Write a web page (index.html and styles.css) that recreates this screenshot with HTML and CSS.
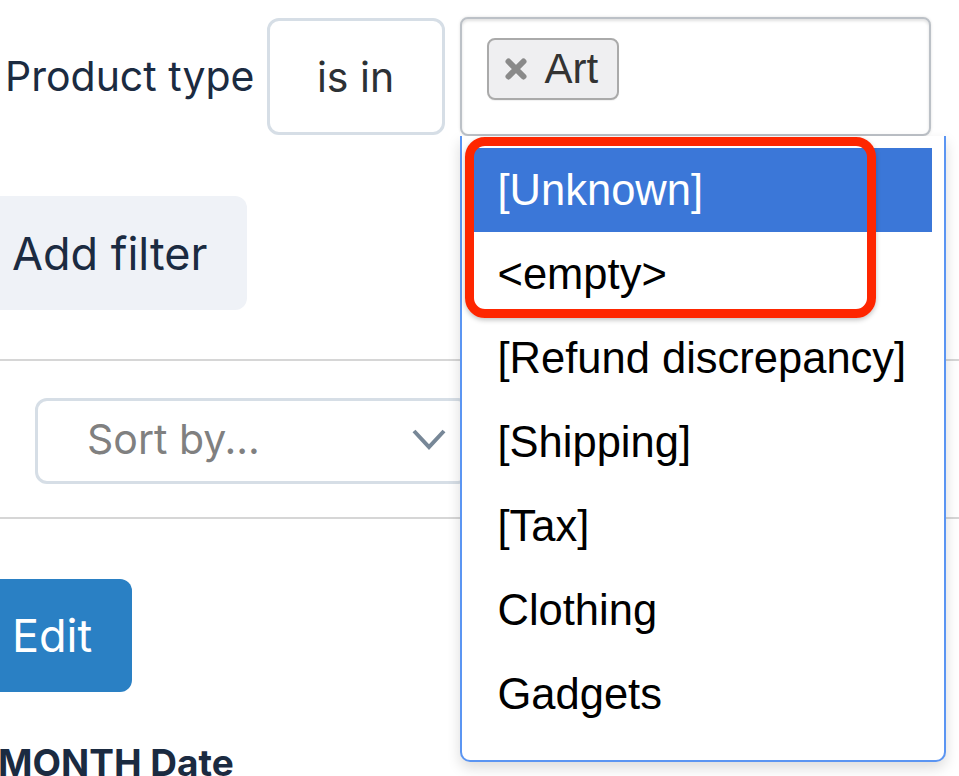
FILE: index.html
```html
<!DOCTYPE html>
<html lang="en">
<head>
<meta charset="utf-8">
<title>Filter</title>
<link rel="stylesheet" href="styles.css">
</head>
<body>
<div class="page">
  <div class="filter-row">
    <span class="field-label">Product type</span>
    <div class="op-box">is in</div>
    <div class="multi-wrap">
      <div class="multi">
        <span class="chip">
          <svg class="chip-x" viewBox="0 0 24 24" width="24" height="24" aria-hidden="true">
            <path d="M4.5 4.5 L19.5 19.5 M19.5 4.5 L4.5 19.5" stroke="#8a8a8a" stroke-width="6" stroke-linecap="round"/>
          </svg>
          <span class="chip-text">Art</span>
        </span>
      </div>
      <ul class="dropdown">
        <li class="opt active">[Unknown]</li>
        <li class="opt">&lt;empty&gt;</li>
        <li class="opt">[Refund discrepancy]</li>
        <li class="opt">[Shipping]</li>
        <li class="opt">[Tax]</li>
        <li class="opt">Clothing</li>
        <li class="opt">Gadgets</li>
      </ul>
      <div class="annotation"></div>
    </div>
  </div>

  <button class="btn-add">Add filter</button>

  <hr class="rule">

  <div class="sort-row">
    <div class="sort-box">
      <span class="sort-placeholder">Sort by...</span>
      <svg class="chevron" viewBox="0 0 34 21" width="34" height="21" aria-hidden="true">
        <polyline points="2,2 17,18 32,2" fill="none" stroke="#778797" stroke-width="4"/>
      </svg>
    </div>
  </div>

  <hr class="rule">

  <button class="btn-edit">Edit</button>

  <h3 class="col-title">MONTH Date</h3>
</div>
</body>
</html>
```

FILE: styles.css
```css
html, body {
  margin: 0;
  padding: 0;
  background: #ffffff;
  overflow: hidden;
}

body {
  font-family: Inter, "Noto Sans", sans-serif;
  color: #1b2b41;
}

.page {
  width: 959px;
  height: 776px;
  overflow: hidden;
}

/* ---------- filter row ---------- */
.filter-row {
  display: flex;
  align-items: center;
  padding-top: 17px;
  height: 119px;
}

.field-label {
  margin-left: 5px;
  margin-right: 12px;
  font-size: 41px;
  line-height: 1;
  color: #1b2b41;
  white-space: nowrap;
}

.op-box {
  box-sizing: border-box;
  width: 178px;
  height: 117px;
  border: 3px solid #d6dee6;
  border-radius: 12px;
  display: flex;
  align-items: center;
  justify-content: center;
  font-size: 41px;
  color: #2d3135;
  margin-right: 15px;
}

.multi-wrap {
  position: relative;
  width: 471px;
  height: 119px;
}

.multi {
  box-sizing: border-box;
  width: 471px;
  height: 119px;
  border: 2px solid #bcc1c7;
  border-radius: 8px;
  box-shadow: inset 0 2px 3px rgba(0, 0, 0, 0.12), 0 0 3px rgba(0, 0, 0, 0.12);
  padding: 19px 25px;
  background: #fff;
}

.chip {
  box-sizing: border-box;
  display: inline-flex;
  align-items: center;
  height: 62px;
  padding: 0 19px 0 15px;
  background: #efeff1;
  border: 2px solid #aaaaaa;
  border-radius: 8px;
  box-shadow: 0 1px 1px rgba(0, 0, 0, 0.06);
}

.chip-x {
  display: block;
  margin-right: 17px;
}

.chip-text {
  font-family: "Liberation Sans", Arial, sans-serif;
  font-size: 42px;
  color: #333333;
  line-height: 1;
}

/* ---------- dropdown (overlay) ---------- */
.dropdown {
  position: absolute;
  left: 0;
  top: 119px;
  box-sizing: border-box;
  width: 486px;
  height: 626px;
  margin: 0;
  padding: 12px 12px 0 12px;
  list-style: none;
  background: #ffffff;
  border: 2px solid #5b95f2;
  border-top: none;
  border-radius: 0 0 10px 10px;
  box-shadow: 0 6px 14px rgba(0, 0, 0, 0.14);
  z-index: 5;
}

.opt {
  height: 84px;
  line-height: 84px;
  padding-left: 24px;
  font-family: "Liberation Sans", Arial, sans-serif;
  font-size: 43.5px;
  color: #000000;
  white-space: nowrap;
}

.opt.active {
  background: #3b77d8;
  color: #ffffff;
}

.annotation {
  position: absolute;
  left: 5px;
  top: 120px;
  box-sizing: border-box;
  width: 411px;
  height: 181px;
  border: 9px solid #fe2600;
  border-radius: 20px;
  box-shadow: 0 2px 5px rgba(0, 0, 0, 0.25);
  z-index: 6;
}

/* ---------- buttons ---------- */
.btn-add {
  display: block;
  margin: 60px 0 0 -28px;
  height: 114px;
  padding: 0 40px;
  border: none;
  border-radius: 12px;
  background: #eff2f7;
  font-family: Inter, "Noto Sans", sans-serif;
  font-size: 45px;
  color: #1b2b41;
}

.rule {
  margin: 0;
  border: none;
  height: 2px;
  background: #d6d6d6;
}

.btn-add + .rule {
  margin-top: 49px;
}

.sort-row {
  padding: 37px 0 33px 35px;
}

.sort-box {
  box-sizing: border-box;
  width: 435px;
  height: 86px;
  border: 3px solid #d6dee6;
  border-radius: 12px;
  display: flex;
  align-items: center;
  justify-content: space-between;
  padding: 0 21px 4px 49px;
}

.sort-placeholder {
  font-size: 41px;
  color: #808080;
}

.chevron {
  display: block;
}

.btn-edit {
  display: block;
  margin: 60px 0 0 -27px;
  height: 113px;
  padding: 0 40px 0 39px;
  border: none;
  border-radius: 12px;
  background: #2a80c4;
  font-family: Inter, "Noto Sans", sans-serif;
  font-size: 45px;
  color: #ffffff;
}

.col-title {
  margin: 47px 0 0 -2px;
  font-size: 37px;
  font-weight: 700;
  line-height: 48px;
  color: #1b2b41;
}
```
